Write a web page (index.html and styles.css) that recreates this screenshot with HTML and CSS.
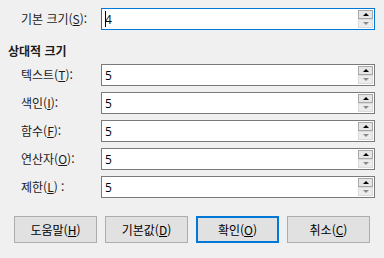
FILE: index.html
```html
<!DOCTYPE html>
<html lang="ko">
<head>
  <meta charset="UTF-8">
  <title>글꼴 크기</title>
  <link rel="stylesheet" href="styles.css">
</head>
<body>
  <div class="dialog">
    <div class="row">
      <label class="label">기본 크기(<u>S</u>):</label>
      <div class="spin focused">
        <span class="value"><span class="caret"></span>4</span>
        <div class="arrows">
          <span class="arrow up"></span>
          <span class="arrow down"></span>
        </div>
      </div>
    </div>

    <h2 class="heading">상대적 크기</h2>

    <div class="rows">
      <div class="row">
        <label class="label">텍스트(<u>T</u>):</label>
        <div class="spin">
          <span class="value">5</span>
          <div class="arrows"><span class="arrow up"></span><span class="arrow down"></span></div>
        </div>
      </div>
      <div class="row">
        <label class="label">색인(<u>I</u>):</label>
        <div class="spin">
          <span class="value">5</span>
          <div class="arrows"><span class="arrow up"></span><span class="arrow down"></span></div>
        </div>
      </div>
      <div class="row">
        <label class="label">함수(<u>F</u>):</label>
        <div class="spin">
          <span class="value">5</span>
          <div class="arrows"><span class="arrow up"></span><span class="arrow down"></span></div>
        </div>
      </div>
      <div class="row">
        <label class="label">연산자(<u>O</u>):</label>
        <div class="spin">
          <span class="value">5</span>
          <div class="arrows"><span class="arrow up"></span><span class="arrow down"></span></div>
        </div>
      </div>
      <div class="row">
        <label class="label">제한(<u>L</u>) :</label>
        <div class="spin">
          <span class="value">5</span>
          <div class="arrows"><span class="arrow up"></span><span class="arrow down"></span></div>
        </div>
      </div>
    </div>

    <div class="buttons">
      <a class="btn">도움말(<u>H</u>)</a>
      <a class="btn">기본값(<u>D</u>)</a>
      <a class="btn default">확인(<u>O</u>)</a>
      <a class="btn">취소(<u>C</u>)</a>
    </div>
  </div>
</body>
</html>
```

FILE: styles.css
```css
* {
  box-sizing: border-box;
}
body {
  margin: 0;
  background: #f0f0f0;
  color: #1a1a1a;
  font-family: "Noto Sans CJK KR", "Noto Sans", sans-serif;
  font-size: 12px;
}
.dialog {
  padding: 8px 9px 0 8px;
}
.row {
  display: grid;
  grid-template-columns: 93px 1fr;
  align-items: center;
}
.label {
  padding-left: 13px;
  line-height: 16px;
}
u {
  text-decoration: underline;
  text-underline-offset: 1px;
}
.spin {
  display: flex;
  height: 22px;
  background: white;
  border: 1px solid #7a7a7a;
}
.spin.focused {
  border-color: #0078d7;
}
.value {
  flex: 1;
  display: flex;
  align-items: center;
  padding-left: 3px;
  font-family: "Open Sans", "Noto Sans", sans-serif;
  font-size: 12px;
  color: #000;
}
.caret {
  width: 1px;
  height: 16px;
  background: #000;
  margin-right: -1px;
}
.arrows {
  display: flex;
  flex-direction: column;
  margin: 1px 1px 1px 0;
  width: 15px;
}
.arrow {
  flex: 1;
  display: flex;
  align-items: center;
  justify-content: center;
}
.arrow.up {
  background: #e5e5e5;
  border: 1px solid #a8a8a8;
}
.arrow.down {
  background: #ececec;
  border: 1px solid #dadada;
}
.arrow.up::after {
  content: "";
  border-left: 3px solid transparent;
  border-right: 3px solid transparent;
  border-bottom: 3px solid #000;
}
.arrow.down::after {
  content: "";
  border-left: 3px solid transparent;
  border-right: 3px solid transparent;
  border-top: 3px solid #8a8a8a;
}
.heading {
  margin: 12px 0 4px 0;
  font-size: 12px;
  font-weight: bold;
  line-height: 18px;
}
.rows {
  display: flex;
  flex-direction: column;
  gap: 6px;
}
.buttons {
  display: flex;
  gap: 8px;
  margin-top: 18px;
  padding-left: 6px;
}
.btn {
  width: 83px;
  height: 27px;
  display: flex;
  align-items: center;
  justify-content: center;
  background: #e1e1e1;
  border: 1px solid #adadad;
  color: #000;
  cursor: pointer;
}
.btn.default {
  border: 2px solid #0078d7;
}
```
